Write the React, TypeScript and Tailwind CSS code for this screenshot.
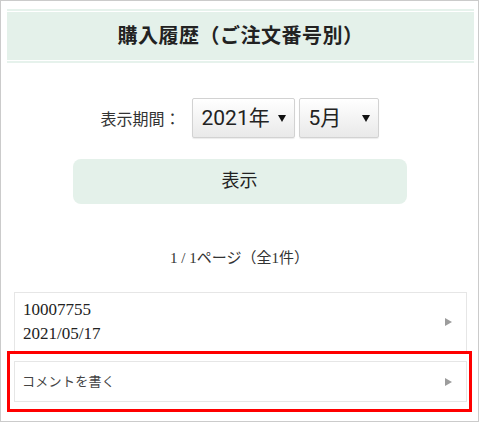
const serif = { fontFamily: '"Liberation Serif", "Noto Sans CJK JP", serif' }

function Arrow() {
  return (
    <svg width="7" height="8" viewBox="0 0 7 8" className="shrink-0">
      <polygon points="0,0 7,4 0,8" fill="#9c9c9c" />
    </svg>
  )
}

function Caret() {
  return (
    <svg width="8" height="7" viewBox="0 0 8 7" className="shrink-0">
      <polygon points="0,0 8,0 4,7" fill="#111" />
    </svg>
  )
}

function SelectBox({ label, width }: { label: string; width: string }) {
  return (
    <div
      className={`${width} h-[40px] flex items-center justify-between pl-[9px] pr-[8px] border border-[#d2d2d2] rounded-[2px] bg-gradient-to-b from-white to-[#e9e9e9] shadow-[0_1px_1px_rgba(0,0,0,0.08)]`}
    >
      <span className="text-[21px] leading-none text-[#222]" style={{ fontFamily: '"Roboto", "Noto Sans CJK JP", sans-serif' }}>
        {label}
      </span>
      <Caret />
    </div>
  )
}

export default function App() {
  return (
    <div className="w-[479px] h-[422px] border border-[#cbcbcb] bg-white overflow-hidden">
      {/* title */}
      <div className="ml-[6px] mt-[8px] w-[467px] border-y-2 border-[#e6f2ec] py-px">
        <div className="h-[48px] bg-[#e4f1ea] flex items-center justify-center">
          <h1 className="text-[20px] font-bold text-[#222] tracking-[0.5px]" style={serif}>
            購入履歴（ご注文番号別）
          </h1>
        </div>
      </div>

      {/* period */}
      <div className="mt-[35px] flex items-center justify-center">
        <span className="text-[16px] text-[#333] mr-[11px]" style={{ fontFamily: '"Noto Sans CJK JP", sans-serif' }}>
          表示期間：
        </span>
        <SelectBox label="2021年" width="w-[103px]" />
        <div className="w-[4px]" />
        <SelectBox label="5月" width="w-[80px]" />
      </div>

      <div className="mt-[21px] flex justify-center">
        <button className="w-[334px] h-[45px] rounded-[8px] bg-[#e4f1ea] text-[18px] text-[#222]" style={serif}>
          表示
        </button>
      </div>

      <p className="mt-[42px] h-[24px] leading-[24px] text-center text-[15px] text-[#333]" style={serif}>
        1 / 1ページ（全1件）
      </p>

      {/* order */}
      <div className="mt-[22px] ml-[13px] w-[453px] h-[59px] border-x border-t border-[#e6e6e6] flex items-center justify-between pl-[8px] pr-[14px]">
        <div className="text-[17px] leading-[24px] text-[#222]" style={serif}>
          <div>10007755</div>
          <div>2021/05/17</div>
        </div>
        <Arrow />
      </div>

      <div className="ml-[6px] w-[465px] border-[3px] border-[#ff0000] py-[7px] pl-[4px]">
        <div className="w-[453px] h-[41px] border border-[#e6e6e6] flex items-center justify-between pl-[7px] pr-[14px]">
          <span className="text-[13px] text-[#444] tracking-[0.3px]" style={serif}>
            コメントを書く
          </span>
          <Arrow />
        </div>
      </div>
    </div>
  )
}
